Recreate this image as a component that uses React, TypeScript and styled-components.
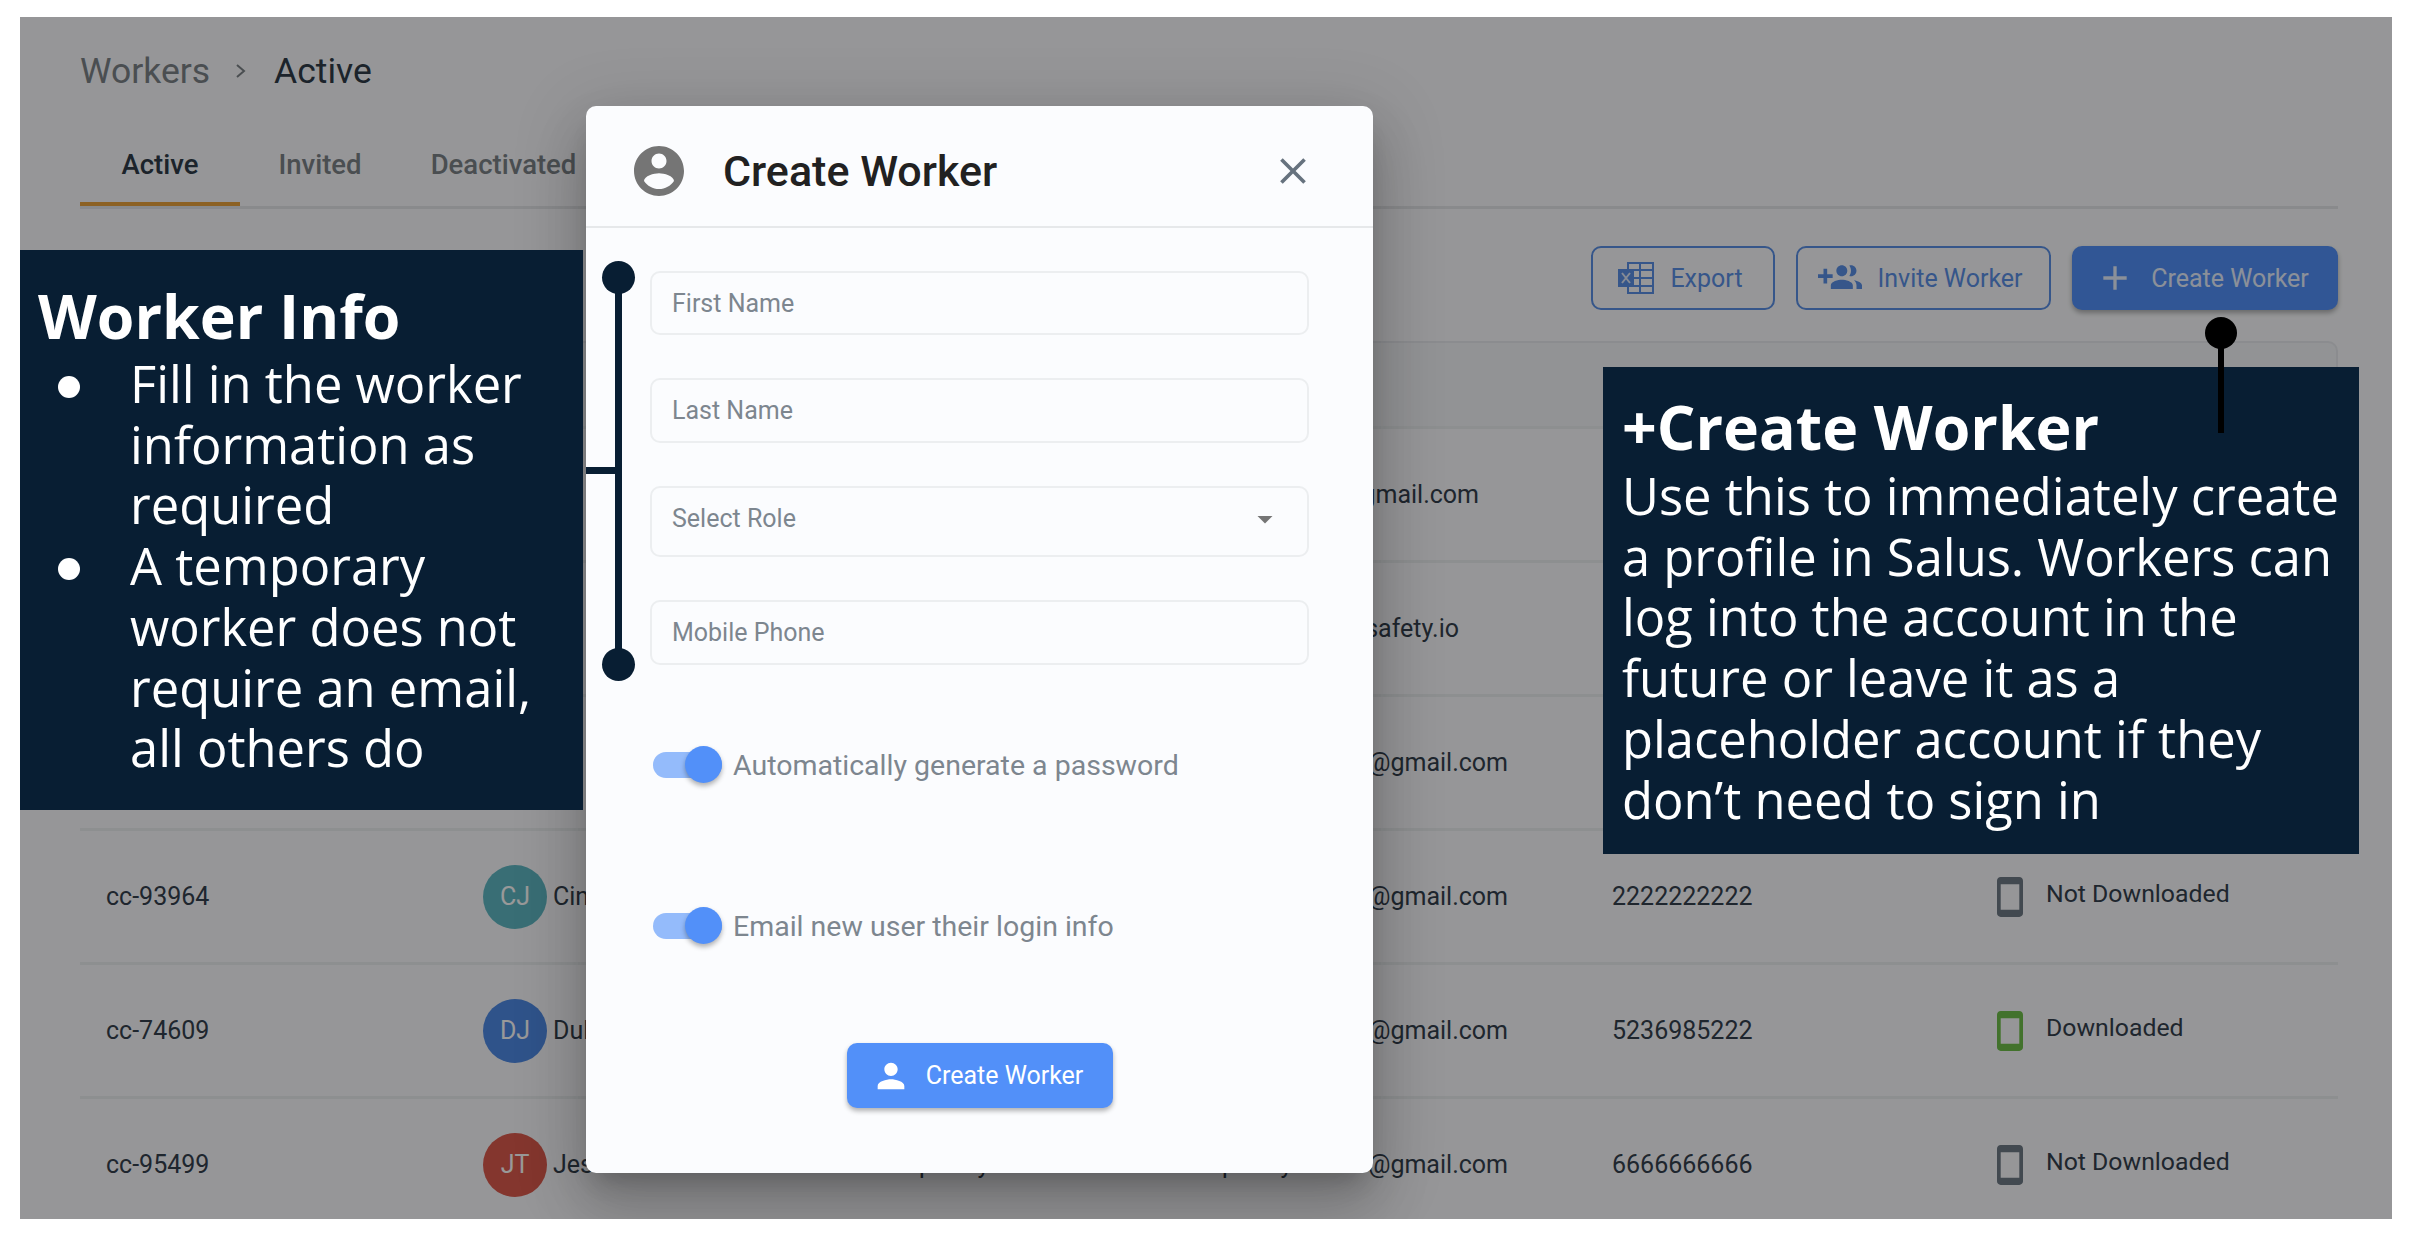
import React from 'react'
import styled, { createGlobalStyle } from 'styled-components'

const GlobalStyle = createGlobalStyle`
  html, body {
    margin: 0;
    padding: 0;
    background: #fff;
  }
  body {
    font-family: Roboto, 'Liberation Sans', sans-serif;
    overflow: hidden;
  }
`

const NAVY = '#081e33'

const Canvas = styled.div`
  position: relative;
  width: 2410px;
  height: 1234px;
  overflow: hidden;
  background: #fff;
`

const Frame = styled.div`
  position: absolute;
  left: 20px;
  top: 17px;
  width: 2372px;
  height: 1202px;
  overflow: hidden;
  background: #fafbfd;
`

const Backdrop = styled.div`
  position: absolute;
  inset: 0;
  background: rgba(0, 0, 0, 0.4);
`

const Page = styled.div`
  display: flex;
  flex-direction: column;
  padding: 32px 54px 0 60px;
`

const Breadcrumb = styled.div`
  display: flex;
  align-items: center;
  height: 44px;
  gap: 22px;
  font-size: 35.5px;
  color: #7c8288;
`

const Crumb = styled.span<{ $current?: boolean }>`
  color: ${(p) => (p.$current ? '#2f3b48' : '#7c8288')};
`

const Tabs = styled.div`
  display: flex;
  margin-top: 41px;
  height: 72px;
  border-bottom: 3px solid #e4e6ea;
`

const Tab = styled.div<{ $active?: boolean; $w: number }>`
  width: ${(p) => p.$w}px;
  height: 72px;
  box-sizing: border-box;
  padding-top: 14px;
  text-align: center;
  font-size: 27.5px;
  font-weight: 500;
  color: ${(p) => (p.$active ? '#2f3b48' : '#7c8288')};
  border-bottom: ${(p) => (p.$active ? '4px solid #e9a23b' : 'none')};
`

const Toolbar = styled.div`
  display: flex;
  justify-content: flex-end;
  gap: 21px;
  margin-top: 37px;
`

const OutlineButton = styled.div<{ $w: number }>`
  width: ${(p) => p.$w}px;
  height: 64px;
  box-sizing: border-box;
  display: flex;
  align-items: center;
  justify-content: center;
  gap: 15px;
  padding-right: 6px;
  border: 2px solid #5a8fe6;
  border-radius: 10px;
  font-size: 25px;
  color: #5a8fe6;
`

const SolidButton = styled.div`
  width: 266px;
  height: 64px;
  box-sizing: border-box;
  display: flex;
  align-items: center;
  justify-content: center;
  gap: 16px;
  padding-right: 6px;
  border-radius: 10px;
  background: #5290f9;
  color: #e8f0ff;
  font-size: 25px;
  box-shadow: 0 3px 5px rgba(0, 0, 0, 0.3);
`

const Table = styled.div`
  margin-top: 31px;
`

const TableHead = styled.div`
  height: 85px;
  border: 2px solid #e8eaee;
  border-bottom: none;
  border-radius: 10px 10px 0 0;
  background: #f3f5f9;
  box-sizing: border-box;
`

const Row = styled.div`
  display: grid;
  grid-template-columns: 377px 387px 280px 462px 385px 1fr;
  align-items: center;
  height: 134px;
  box-sizing: border-box;
  padding-left: 26px;
  border-top: 3px solid #eceef1;
  font-size: 25px;
  color: #34404e;
`

const NameCell = styled.div`
  display: flex;
  align-items: center;
  gap: 6px;
`

const Avatar = styled.div<{ $bg: string }>`
  width: 64px;
  height: 64px;
  border-radius: 50%;
  display: flex;
  align-items: center;
  justify-content: center;
  background: ${(p) => p.$bg};
  color: #fff;
  font-size: 25px;
`

const EmailCell = styled.div<{ $inset: number }>`
  text-align: right;
  white-space: nowrap;
  padding-right: ${(p) => 104 + p.$inset}px;
`

const AppCell = styled.div`
  display: flex;
  align-items: center;
  gap: 23px;
  font-size: 24.8px;
`

const AppLabel = styled.span`
  position: relative;
  top: -3px;
`

const Modal = styled.div`
  position: absolute;
  left: 566px;
  top: 89px;
  width: 787px;
  height: 1067px;
  display: flex;
  flex-direction: column;
  border-radius: 10px;
  background: #fbfcfe;
  box-shadow: 0 16px 22px -10px rgba(0, 0, 0, 0.2), 0 36px 56px 4px rgba(0, 0, 0, 0.14), 0 14px 68px 12px rgba(0, 0, 0, 0.12);
`

const ModalHeader = styled.div`
  display: flex;
  align-items: center;
  height: 122px;
  box-sizing: border-box;
  padding: 10px 58px 0 43px;
  border-bottom: 2px solid #e6e8ea;
`

const ModalTitle = styled.div`
  flex: 1;
  margin-left: 34px;
  font-size: 43px;
  font-weight: 500;
  color: #212121;
`

const ModalBody = styled.div`
  display: flex;
  flex-direction: column;
  padding: 43px 64px 0 64px;
`

const Field = styled.div<{ $h: number; $gap: number; $lift?: number }>`
  height: ${(p) => p.$h}px;
  margin-bottom: ${(p) => p.$gap}px;
  box-sizing: border-box;
  display: flex;
  align-items: center;
  justify-content: space-between;
  padding: 0 24px ${(p) => p.$lift ?? 0}px 20px;
  border: 2px solid #eceef0;
  border-radius: 10px;
  font-size: 25px;
  color: #7d868f;
`

const SwitchRow = styled.div<{ $top: number }>`
  display: flex;
  align-items: center;
  gap: 11px;
  height: 40px;
  margin-top: ${(p) => p.$top}px;
  padding-left: 3px;
  font-size: 28.5px;
  color: #7d868f;
`

const SwitchTrack = styled.div`
  position: relative;
  width: 69px;
  height: 26px;
  border-radius: 13px;
  background: #94bbfb;
`

const SwitchThumb = styled.div`
  position: absolute;
  right: 0;
  top: -6px;
  width: 37px;
  height: 37px;
  border-radius: 50%;
  background: #5290f9;
  box-shadow: 0 3px 5px rgba(0, 0, 0, 0.3);
`

const SubmitRow = styled.div`
  display: flex;
  justify-content: center;
  margin-top: 97px;
`

const SubmitButton = styled.div`
  width: 266px;
  height: 65px;
  box-sizing: border-box;
  display: flex;
  align-items: center;
  justify-content: center;
  gap: 15px;
  padding-right: 5px;
  border-radius: 10px;
  background: #5290f9;
  color: #fff;
  font-size: 25px;
  box-shadow: 0 3px 5px rgba(0, 0, 0, 0.3);
`

const Callout = styled.div<{ $left: number; $top: number; $w: number; $h: number; $pad: string }>`
  position: absolute;
  left: ${(p) => p.$left}px;
  top: ${(p) => p.$top}px;
  width: ${(p) => p.$w}px;
  height: ${(p) => p.$h}px;
  box-sizing: border-box;
  padding: ${(p) => p.$pad};
  background: ${NAVY};
  color: #fff;
  font-family: 'Open Sans', 'Noto Sans', sans-serif;
  font-size: 50.7px;
  line-height: 60.7px;
`

const CalloutTitle = styled.div<{ $lh: number }>`
  font-size: 60.8px;
  font-weight: 700;
  line-height: ${(p) => p.$lh}px;
`

const BulletList = styled.ul`
  list-style: none;
  margin: 0;
  padding: 0;
`

const Bullet = styled.li`
  position: relative;
  padding-left: 92px;

  &::before {
    content: '';
    position: absolute;
    left: 20px;
    top: 22px;
    width: 22px;
    height: 22px;
    border-radius: 50%;
    background: #fff;
  }
`

const Rail = styled.div<{ $color: string; $left: number; $top: number; $w: number; $h: number }>`
  position: absolute;
  left: ${(p) => p.$left}px;
  top: ${(p) => p.$top}px;
  width: ${(p) => p.$w}px;
  height: ${(p) => p.$h}px;
  background: ${(p) => p.$color};
`

const Dot = styled.div<{ $color: string; $x: number; $y: number; $d: number }>`
  position: absolute;
  left: ${(p) => p.$x - p.$d / 2}px;
  top: ${(p) => p.$y - p.$d / 2}px;
  width: ${(p) => p.$d}px;
  height: ${(p) => p.$d}px;
  border-radius: 50%;
  background: ${(p) => p.$color};
`

const MuiIcon = ({ d, size, color }: { d: string; size: number; color: string }) => (
  <svg width={size} height={size} viewBox="0 0 24 24" fill={color}>
    <path d={d} />
  </svg>
)

const ExcelIcon = () => (
  <svg width="38" height="34" viewBox="0 0 38 34" fill="none">
    <rect x="11" y="2" width="25" height="30" fill="none" stroke="#5a8fe6" strokeWidth="2" />
    <path d="M11 9h25M11 17h25M11 25h25M23 2v30" stroke="#5a8fe6" strokeWidth="2" />
    <rect x="1" y="8" width="16" height="18" fill="#5a8fe6" />
    <path d="M5 12l8 10M13 12l-8 10" stroke="#dfe8f8" strokeWidth="2" />
  </svg>
)

const PhoneIcon = ({ color }: { color: string }) => (
  <svg width="26" height="40" viewBox="5 1 14 22" preserveAspectRatio="none" fill={color}>
    <path d="M17 1.01L7 1c-1.1 0-2 .9-2 2v18c0 1.1.9 2 2 2h10c1.1 0 2-.9 2-2V3c0-1.1-.9-1.99-2-1.99zM17 19H7V5h10v14z" />
  </svg>
)

const paths = {
  account:
    'M12 2C6.48 2 2 6.48 2 12s4.48 10 10 10 10-4.48 10-10S17.52 2 12 2zm0 3c1.66 0 3 1.34 3 3s-1.34 3-3 3-3-1.34-3-3 1.34-3 3-3zm0 14.2c-2.5 0-4.71-1.28-6-3.22.03-1.99 4-3.08 6-3.08 1.99 0 5.97 1.09 6 3.08-1.29 1.94-3.5 3.22-6 3.22z',
  person: 'M12 12c2.21 0 4-1.79 4-4s-1.79-4-4-4-4 1.79-4 4 1.79 4 4 4zm0 2c-2.67 0-8 1.34-8 4v2h16v-2c0-2.66-5.33-4-8-4z',
  close: 'M19 6.41L17.59 5 12 10.59 6.41 5 5 6.41 10.59 12 5 17.59 6.41 19 12 13.41 17.59 19 19 17.59 13.41 12z',
  add: 'M19 13h-6v6h-2v-6H5v-2h6V5h2v6h6v2z',
  groupAdd:
    'M8 10H5V7H3v3H0v2h3v3h2v-3h3v-2zm10 1c1.66 0 2.99-1.34 2.99-3S19.66 5 18 5c-.32 0-.63.05-.91.14.57.81.9 1.79.9 2.86s-.34 2.04-.9 2.86c.28.09.59.14.91.14zm-5 0c1.66 0 2.99-1.34 2.99-3S14.66 5 13 5c-1.66 0-3 1.34-3 3s1.34 3 3 3zm6.62 2.16c.83.73 1.38 1.66 1.38 2.84v2h3v-2c0-1.54-2.37-2.49-4.38-2.84zM13 13c-2 0-6 1-6 3v2h12v-2c0-2-4-3-6-3z',
  caret: 'M7 10l5 5 5-5z',
}

const rows = [
  { id: '', initials: '', bg: '', name: '', role: '', email: 'gmail.com', inset: 29, phone: '', app: '' },
  { id: '', initials: '', bg: '', name: '', role: '', email: 'safety.io', inset: 49, phone: '', app: '' },
  { id: '', initials: '', bg: '', name: '', role: '', email: '@gmail.com', inset: 0, phone: '', app: '' },
  { id: 'cc-93964', initials: 'CJ', bg: '#5fb8c4', name: 'Cin', role: '', email: '@gmail.com', inset: 0, phone: '2222222222', app: 'Not Downloaded' },
  { id: 'cc-74609', initials: 'DJ', bg: '#4f8ae6', name: 'Dul', role: '', email: '@gmail.com', inset: 0, phone: '5236985222', app: 'Downloaded' },
  { id: 'cc-95499', initials: 'JT', bg: '#dc5a4e', name: 'Jes', role: 'Temporary', email: 'temporaryworker@gmail.com', inset: 0, phone: '6666666666', app: 'Not Downloaded' },
]

export default function App() {
  return (
    <Canvas>
      <GlobalStyle />
      <Frame>
        <Page>
          <Breadcrumb>
            <Crumb>Workers</Crumb>
            <svg width="20" height="24" viewBox="0 0 20 24" fill="none" stroke="#7c8288" strokeWidth="2">
              <path d="M5 6l7 6-7 6" />
            </svg>
            <Crumb $current>Active</Crumb>
          </Breadcrumb>
          <Tabs>
            <Tab $active $w={160}>Active</Tab>
            <Tab $w={160}>Invited</Tab>
            <Tab $w={207}>Deactivated</Tab>
          </Tabs>
          <Toolbar>
            <OutlineButton $w={184}>
              <ExcelIcon />
              Export
            </OutlineButton>
            <OutlineButton $w={255}>
              <MuiIcon d={paths.groupAdd} size={44} color="#5a8fe6" />
              Invite Worker
            </OutlineButton>
            <SolidButton>
              <MuiIcon d={paths.add} size={40} color="#e8f0ff" />
              Create Worker
            </SolidButton>
          </Toolbar>
          <Table>
            <TableHead />
            {rows.map((r, i) => (
              <Row key={i}>
                <div>{r.id}</div>
                <NameCell>
                  {r.initials && <Avatar $bg={r.bg}>{r.initials}</Avatar>}
                  {r.name}
                </NameCell>
                <div>{r.role}</div>
                <EmailCell $inset={r.inset}>{r.email}</EmailCell>
                <div>{r.phone}</div>
                {r.app && (
                  <AppCell>
                    <PhoneIcon color={r.app === 'Downloaded' ? '#6fbf4a' : '#6f7a86'} />
                    <AppLabel>{r.app}</AppLabel>
                  </AppCell>
                )}
              </Row>
            ))}
          </Table>
        </Page>
        <Backdrop />
        <Modal>
          <ModalHeader>
            <MuiIcon d={paths.account} size={60} color="#757575" />
            <ModalTitle>Create Worker</ModalTitle>
            <MuiIcon d={paths.close} size={44} color="#66727e" />
          </ModalHeader>
          <ModalBody>
            <Field $h={64} $gap={43}>First Name</Field>
            <Field $h={65} $gap={43}>Last Name</Field>
            <Field $h={71} $gap={43} $lift={6}>
              Select Role
              <MuiIcon d={paths.caret} size={36} color="#757575" />
            </Field>
            <Field $h={65} $gap={0}>Mobile Phone</Field>
            <SwitchRow $top={80}>
              <SwitchTrack>
                <SwitchThumb />
              </SwitchTrack>
              Automatically generate a password
            </SwitchRow>
            <SwitchRow $top={121}>
              <SwitchTrack>
                <SwitchThumb />
              </SwitchTrack>
              Email new user their login info
            </SwitchRow>
            <SubmitRow>
              <SubmitButton>
                <MuiIcon d={paths.person} size={40} color="#fff" />
                Create Worker
              </SubmitButton>
            </SubmitRow>
          </ModalBody>
        </Modal>
      </Frame>

      <Callout $left={20} $top={250} $w={563} $h={560} $pad="28px 0 0 18px">
        <CalloutTitle $lh={76}>Worker Info</CalloutTitle>
        <BulletList>
          <Bullet>Fill in the worker information as required</Bullet>
          <Bullet>A temporary worker does not require an email, all others do</Bullet>
        </BulletList>
      </Callout>

      <Rail $color={NAVY} $left={615} $top={277} $w={7} $h={387} />
      <Rail $color={NAVY} $left={586} $top={467} $w={30} $h={7} />
      <Dot $color={NAVY} $x={618} $y={277} $d={33} />
      <Dot $color={NAVY} $x={618} $y={664} $d={33} />

      <Callout $left={1603} $top={367} $w={756} $h={487} $pad="20px 0 0 19px">
        <CalloutTitle $lh={79}>+Create Worker</CalloutTitle>
        Use this to immediately create a profile in Salus. Workers can log into the account in the future or leave it as a placeholder account if they don’t need to sign in
      </Callout>

      <Rail $color="#000" $left={2218} $top={333} $w={6} $h={100} />
      <Dot $color="#000" $x={2221} $y={333} $d={32} />
    </Canvas>
  )
}
